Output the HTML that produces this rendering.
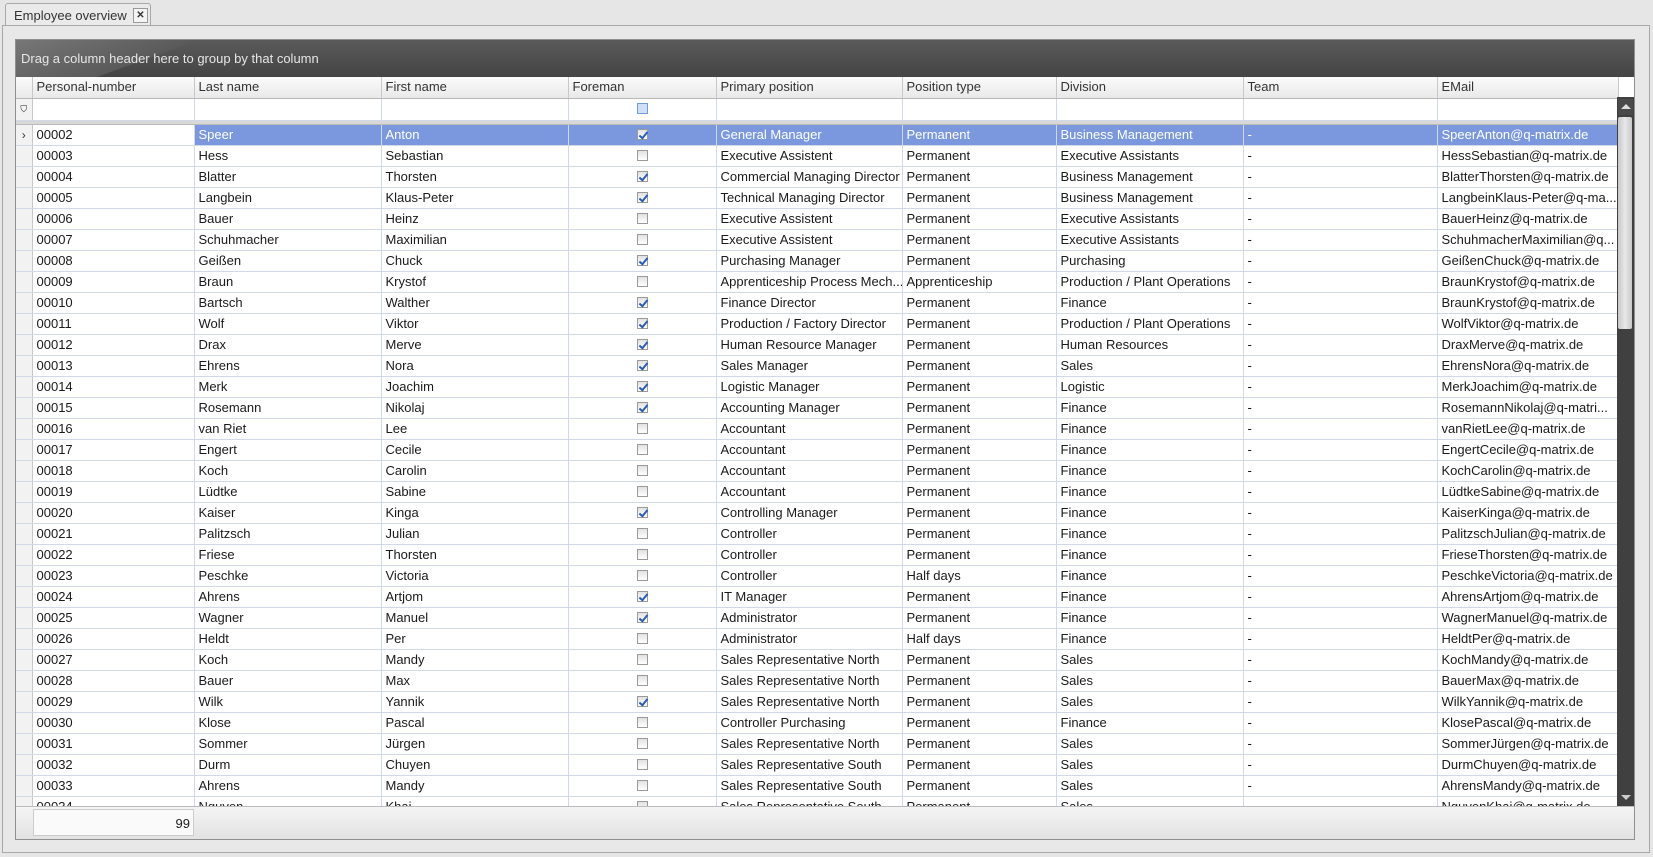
<!DOCTYPE html>
<html><head><meta charset="utf-8">
<style>
*{box-sizing:border-box;margin:0;padding:0}
body{width:1653px;height:857px;background:#e6e6e6;font-family:"Liberation Sans",sans-serif;font-size:13px;color:#1a1a1a;position:relative;overflow:hidden}
.tab{position:absolute;left:5px;top:3px;width:146px;height:23px;border:1px solid #a8a8a8;border-bottom:none;background:#eaeaea;border-radius:3px 3px 0 0;padding:4px 0 0 8px;color:#333;font-size:13px}
.tab .x{position:absolute;left:127px;top:4px;width:15px;height:15px;border:1px solid #999;background:#f4f4f4;font-size:10px;line-height:13px;text-align:center;font-weight:bold}
.panel{position:absolute;left:2px;top:25px;width:1648px;height:828px;border:1px solid #a8a8a8;background:#e8e8e8}
.grid{position:absolute;left:15px;top:39px;width:1620px;height:801px;border:1px solid #8f8f8f;background:#fff;overflow:hidden}
.band{position:absolute;left:0;top:0;width:1620px;height:37px;background:linear-gradient(#5a5a5a,#444);color:#e6e6e6;font-size:13px;padding:11px 0 0 5px}
.band:before{content:"";position:absolute;left:0;top:0;width:200px;height:37px;background:linear-gradient(160deg,#777 0%,#5a5a5a 60%,transparent 61%)}
.band span{position:relative}
table{border-collapse:collapse;table-layout:fixed;position:absolute;left:0}
td{height:21px;border-right:1px solid #d2d9e6;border-bottom:1px solid #d2d9e6;padding:0 0 0 4px;white-space:nowrap;overflow:hidden;font-size:13px;line-height:20px}
.hd td{background:linear-gradient(#fbfbfb,#e9e9e9);border-right:1px solid #c8c8c8;border-bottom:1px solid #b8b8b8;color:#333;height:21px}
.fl td{height:22px;border-right:1px solid #d2d9e6}
td.ind{background:#f2f2f2;border-right:1px solid #c8c8c8;padding:0}
.sel td{background:#7b97de;color:#fff}
.sel td.w{background:#fff;color:#1a1a1a}
.sel td.ind{background:#f2f2f2;color:#333}
.cb{display:inline-block;width:11px;height:11px;border:1px solid #9a9a9a;background:linear-gradient(#e2e2e2,#fff);vertical-align:middle;position:relative;top:-1px}
.cb.c:after{content:"";position:absolute;left:3px;top:0px;width:3px;height:7px;border:solid #2b5bb8;border-width:0 2px 2px 0;transform:rotate(40deg)}
td.c{text-align:center;padding:0}
.sb{position:absolute;left:1601px;top:57px;width:17px;height:710px;background:#404040}
.sb .up{position:absolute;left:1px;top:2px;width:15px;height:16px;background:#4a4a4a}
.sb .up:after{content:"";position:absolute;left:3px;top:5px;border:5px solid transparent;border-bottom:5px solid #ddd;border-top:none}
.sb .th{position:absolute;left:1px;top:20px;width:14px;height:212px;background:linear-gradient(90deg,#c8c8c8,#e8e8e8,#c8c8c8);border-radius:2px}
.sb .dn{position:absolute;left:4px;top:698px;border:5px solid transparent;border-top:5px solid #ccc;border-bottom:none}
.foot{position:absolute;left:0;top:766px;width:1618px;height:33px;background:linear-gradient(#f4f4f4,#e2e2e2);border-top:1px solid #bbb}
.foot .b{position:absolute;left:17px;top:2px;width:161px;height:27px;background:#fafafa;border:1px solid #ccc;text-align:right;padding:6px 3px 0 0}
</style></head><body>
<div class="tab">Employee overview<div class="x">✕</div></div>
<div class="panel"></div>
<div class="grid">
<div class="band"><span>Drag a column header here to group by that column</span></div>
<table style="top:37px;width:1602px">
<colgroup><col style="width:16px"><col style="width:162px"><col style="width:187px"><col style="width:187px"><col style="width:148px"><col style="width:186px"><col style="width:154px"><col style="width:187px"><col style="width:194px"><col style="width:181px"></colgroup>
<tr class="hd"><td class="ind" style="background:linear-gradient(#fbfbfb,#e9e9e9)"></td><td>Personal-number</td><td>Last name</td><td>First name</td><td>Foreman</td><td>Primary position</td><td>Position type</td><td>Division</td><td>Team</td><td>EMail</td></tr>
<tr class="fl"><td class="ind" style="font-size:9px;text-align:center">⛉</td><td></td><td></td><td></td><td class="c"><span class="cb" style="background:#cfe0f7;border-color:#6f9bd8"></span></td><td></td><td></td><td></td><td></td><td></td></tr>
<tr><td colspan="10" style="height:4px;background:#d8d8d8;border-bottom:1px solid #bbb;padding:0"></td></tr>
<tr class="sel"><td class="ind" style="text-align:center;font-size:12px">›</td><td class="w">00002</td><td>Speer</td><td>Anton</td><td class="c"><span class="cb c"></span></td><td>General Manager</td><td>Permanent</td><td>Business Management</td><td>-</td><td>SpeerAnton@q-matrix.de</td></tr>
<tr><td class="ind"></td><td>00003</td><td>Hess</td><td>Sebastian</td><td class="c"><span class="cb"></span></td><td>Executive Assistent</td><td>Permanent</td><td>Executive Assistants</td><td>-</td><td>HessSebastian@q-matrix.de</td></tr>
<tr><td class="ind"></td><td>00004</td><td>Blatter</td><td>Thorsten</td><td class="c"><span class="cb c"></span></td><td>Commercial Managing Director</td><td>Permanent</td><td>Business Management</td><td>-</td><td>BlatterThorsten@q-matrix.de</td></tr>
<tr><td class="ind"></td><td>00005</td><td>Langbein</td><td>Klaus-Peter</td><td class="c"><span class="cb c"></span></td><td>Technical Managing Director</td><td>Permanent</td><td>Business Management</td><td>-</td><td>LangbeinKlaus-Peter@q-ma...</td></tr>
<tr><td class="ind"></td><td>00006</td><td>Bauer</td><td>Heinz</td><td class="c"><span class="cb"></span></td><td>Executive Assistent</td><td>Permanent</td><td>Executive Assistants</td><td>-</td><td>BauerHeinz@q-matrix.de</td></tr>
<tr><td class="ind"></td><td>00007</td><td>Schuhmacher</td><td>Maximilian</td><td class="c"><span class="cb"></span></td><td>Executive Assistent</td><td>Permanent</td><td>Executive Assistants</td><td>-</td><td>SchuhmacherMaximilian@q...</td></tr>
<tr><td class="ind"></td><td>00008</td><td>Geißen</td><td>Chuck</td><td class="c"><span class="cb c"></span></td><td>Purchasing Manager</td><td>Permanent</td><td>Purchasing</td><td>-</td><td>GeißenChuck@q-matrix.de</td></tr>
<tr><td class="ind"></td><td>00009</td><td>Braun</td><td>Krystof</td><td class="c"><span class="cb"></span></td><td>Apprenticeship Process Mech...</td><td>Apprenticeship</td><td>Production / Plant Operations</td><td>-</td><td>BraunKrystof@q-matrix.de</td></tr>
<tr><td class="ind"></td><td>00010</td><td>Bartsch</td><td>Walther</td><td class="c"><span class="cb c"></span></td><td>Finance Director</td><td>Permanent</td><td>Finance</td><td>-</td><td>BraunKrystof@q-matrix.de</td></tr>
<tr><td class="ind"></td><td>00011</td><td>Wolf</td><td>Viktor</td><td class="c"><span class="cb c"></span></td><td>Production / Factory Director</td><td>Permanent</td><td>Production / Plant Operations</td><td>-</td><td>WolfViktor@q-matrix.de</td></tr>
<tr><td class="ind"></td><td>00012</td><td>Drax</td><td>Merve</td><td class="c"><span class="cb c"></span></td><td>Human Resource Manager</td><td>Permanent</td><td>Human Resources</td><td>-</td><td>DraxMerve@q-matrix.de</td></tr>
<tr><td class="ind"></td><td>00013</td><td>Ehrens</td><td>Nora</td><td class="c"><span class="cb c"></span></td><td>Sales Manager</td><td>Permanent</td><td>Sales</td><td>-</td><td>EhrensNora@q-matrix.de</td></tr>
<tr><td class="ind"></td><td>00014</td><td>Merk</td><td>Joachim</td><td class="c"><span class="cb c"></span></td><td>Logistic Manager</td><td>Permanent</td><td>Logistic</td><td>-</td><td>MerkJoachim@q-matrix.de</td></tr>
<tr><td class="ind"></td><td>00015</td><td>Rosemann</td><td>Nikolaj</td><td class="c"><span class="cb c"></span></td><td>Accounting Manager</td><td>Permanent</td><td>Finance</td><td>-</td><td>RosemannNikolaj@q-matri...</td></tr>
<tr><td class="ind"></td><td>00016</td><td>van Riet</td><td>Lee</td><td class="c"><span class="cb"></span></td><td>Accountant</td><td>Permanent</td><td>Finance</td><td>-</td><td>vanRietLee@q-matrix.de</td></tr>
<tr><td class="ind"></td><td>00017</td><td>Engert</td><td>Cecile</td><td class="c"><span class="cb"></span></td><td>Accountant</td><td>Permanent</td><td>Finance</td><td>-</td><td>EngertCecile@q-matrix.de</td></tr>
<tr><td class="ind"></td><td>00018</td><td>Koch</td><td>Carolin</td><td class="c"><span class="cb"></span></td><td>Accountant</td><td>Permanent</td><td>Finance</td><td>-</td><td>KochCarolin@q-matrix.de</td></tr>
<tr><td class="ind"></td><td>00019</td><td>Lüdtke</td><td>Sabine</td><td class="c"><span class="cb"></span></td><td>Accountant</td><td>Permanent</td><td>Finance</td><td>-</td><td>LüdtkeSabine@q-matrix.de</td></tr>
<tr><td class="ind"></td><td>00020</td><td>Kaiser</td><td>Kinga</td><td class="c"><span class="cb c"></span></td><td>Controlling Manager</td><td>Permanent</td><td>Finance</td><td>-</td><td>KaiserKinga@q-matrix.de</td></tr>
<tr><td class="ind"></td><td>00021</td><td>Palitzsch</td><td>Julian</td><td class="c"><span class="cb"></span></td><td>Controller</td><td>Permanent</td><td>Finance</td><td>-</td><td>PalitzschJulian@q-matrix.de</td></tr>
<tr><td class="ind"></td><td>00022</td><td>Friese</td><td>Thorsten</td><td class="c"><span class="cb"></span></td><td>Controller</td><td>Permanent</td><td>Finance</td><td>-</td><td>FrieseThorsten@q-matrix.de</td></tr>
<tr><td class="ind"></td><td>00023</td><td>Peschke</td><td>Victoria</td><td class="c"><span class="cb"></span></td><td>Controller</td><td>Half days</td><td>Finance</td><td>-</td><td>PeschkeVictoria@q-matrix.de</td></tr>
<tr><td class="ind"></td><td>00024</td><td>Ahrens</td><td>Artjom</td><td class="c"><span class="cb c"></span></td><td>IT Manager</td><td>Permanent</td><td>Finance</td><td>-</td><td>AhrensArtjom@q-matrix.de</td></tr>
<tr><td class="ind"></td><td>00025</td><td>Wagner</td><td>Manuel</td><td class="c"><span class="cb c"></span></td><td>Administrator</td><td>Permanent</td><td>Finance</td><td>-</td><td>WagnerManuel@q-matrix.de</td></tr>
<tr><td class="ind"></td><td>00026</td><td>Heldt</td><td>Per</td><td class="c"><span class="cb"></span></td><td>Administrator</td><td>Half days</td><td>Finance</td><td>-</td><td>HeldtPer@q-matrix.de</td></tr>
<tr><td class="ind"></td><td>00027</td><td>Koch</td><td>Mandy</td><td class="c"><span class="cb"></span></td><td>Sales Representative North</td><td>Permanent</td><td>Sales</td><td>-</td><td>KochMandy@q-matrix.de</td></tr>
<tr><td class="ind"></td><td>00028</td><td>Bauer</td><td>Max</td><td class="c"><span class="cb"></span></td><td>Sales Representative North</td><td>Permanent</td><td>Sales</td><td>-</td><td>BauerMax@q-matrix.de</td></tr>
<tr><td class="ind"></td><td>00029</td><td>Wilk</td><td>Yannik</td><td class="c"><span class="cb c"></span></td><td>Sales Representative North</td><td>Permanent</td><td>Sales</td><td>-</td><td>WilkYannik@q-matrix.de</td></tr>
<tr><td class="ind"></td><td>00030</td><td>Klose</td><td>Pascal</td><td class="c"><span class="cb"></span></td><td>Controller Purchasing</td><td>Permanent</td><td>Finance</td><td>-</td><td>KlosePascal@q-matrix.de</td></tr>
<tr><td class="ind"></td><td>00031</td><td>Sommer</td><td>Jürgen</td><td class="c"><span class="cb"></span></td><td>Sales Representative North</td><td>Permanent</td><td>Sales</td><td>-</td><td>SommerJürgen@q-matrix.de</td></tr>
<tr><td class="ind"></td><td>00032</td><td>Durm</td><td>Chuyen</td><td class="c"><span class="cb"></span></td><td>Sales Representative South</td><td>Permanent</td><td>Sales</td><td>-</td><td>DurmChuyen@q-matrix.de</td></tr>
<tr><td class="ind"></td><td>00033</td><td>Ahrens</td><td>Mandy</td><td class="c"><span class="cb"></span></td><td>Sales Representative South</td><td>Permanent</td><td>Sales</td><td>-</td><td>AhrensMandy@q-matrix.de</td></tr>
<tr><td class="ind"></td><td>00034</td><td>Nguyen</td><td>Khai</td><td class="c"><span class="cb"></span></td><td>Sales Representative South</td><td>Permanent</td><td>Sales</td><td>-</td><td>NguyenKhai@q-matrix.de</td></tr>
</table>
<div class="sb"><div class="up"></div><div class="th"></div><div class="dn"></div></div>
<div class="foot"><div class="b">99</div></div>
</div>
</body></html>
